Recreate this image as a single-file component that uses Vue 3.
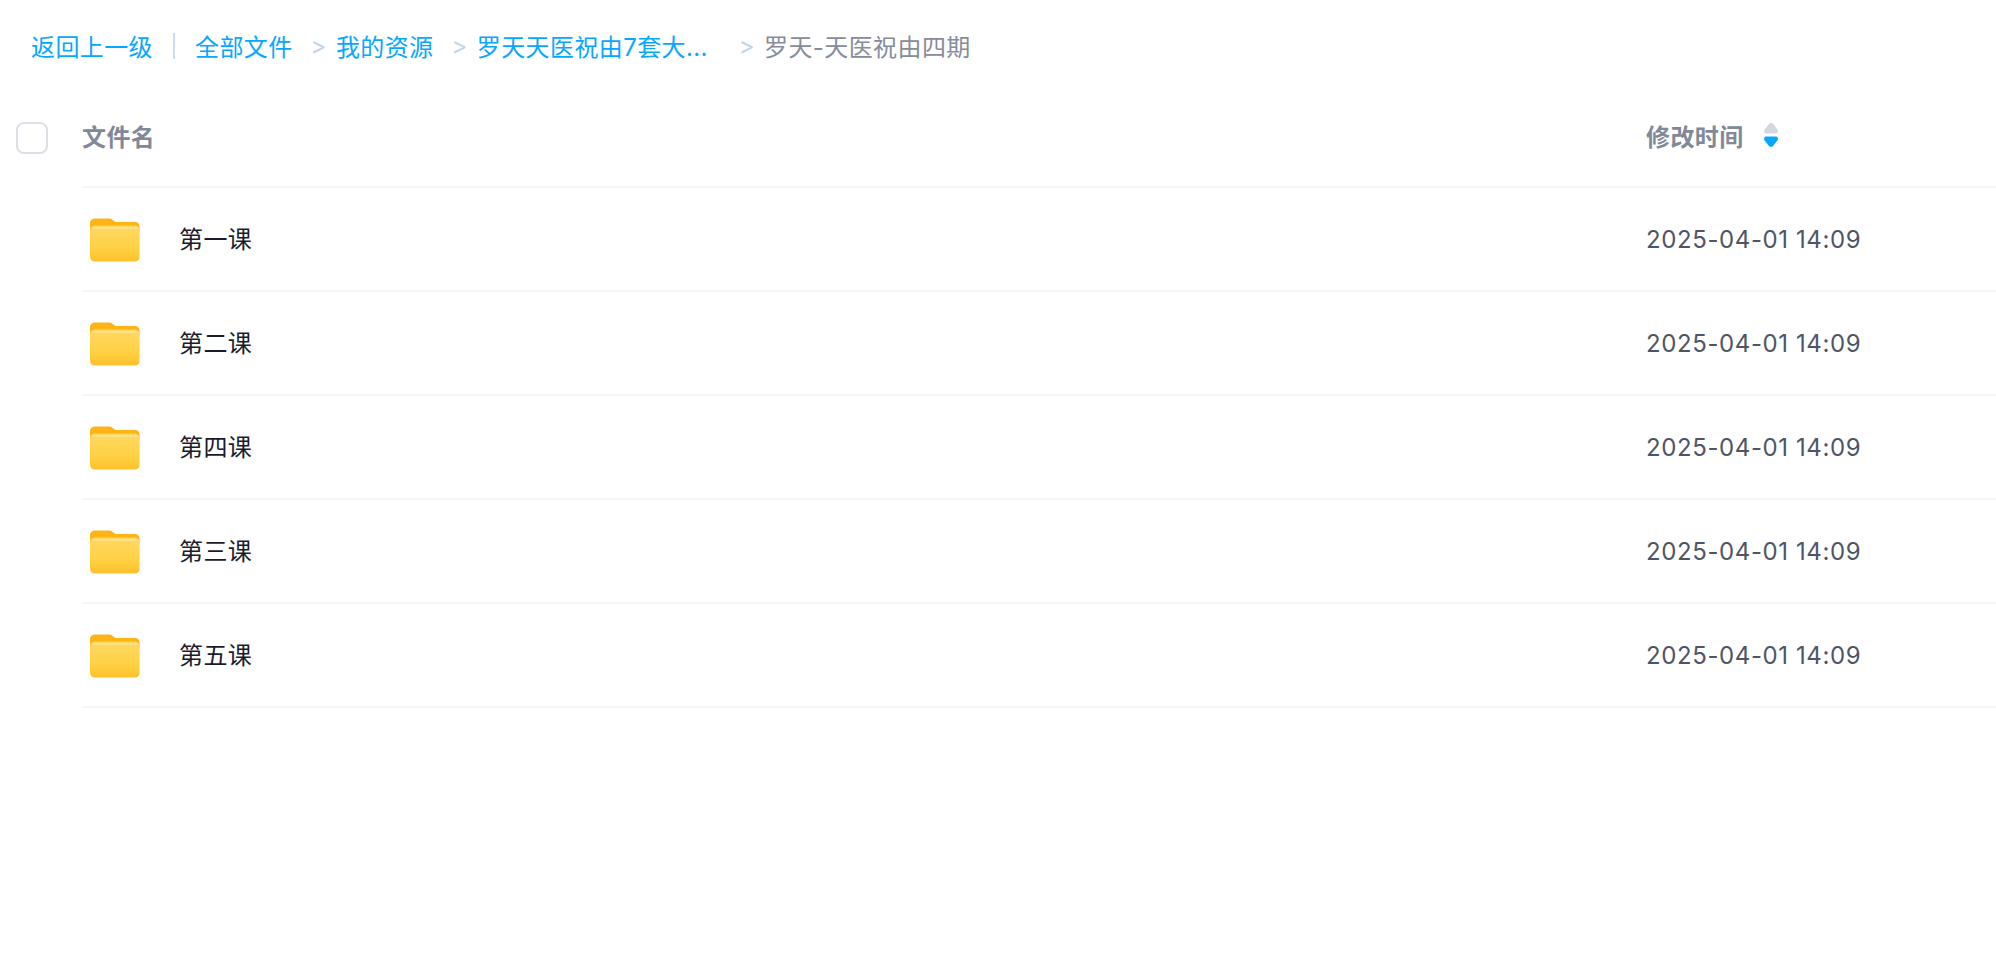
<script setup>
const crumbs = [
  { name: "全部文件" },
  { name: "我的资源" },
  { name: "罗天天医祝由7套大...", wide: true },
];

const files = [
  { name: "第一课", time: "2025-04-01 14:09" },
  { name: "第二课", time: "2025-04-01 14:09" },
  { name: "第四课", time: "2025-04-01 14:09" },
  { name: "第三课", time: "2025-04-01 14:09" },
  { name: "第五课", time: "2025-04-01 14:09" },
];
</script>

<template>
  <div class="page">
    <div class="crumbs">
      <a class="link">返回上一级</a>
      <span class="bar"></span>
      <template v-for="c in crumbs" :key="c.name">
        <a class="link" :class="{ wide: c.wide }">{{ c.name }}</a>
        <span class="sep">&gt;</span>
      </template>
      <span class="current">罗天-天医祝由四期</span>
    </div>

    <div class="head">
      <span class="check"></span>
      <div class="head-row">
        <span class="col-name">文件名</span>
        <span class="col-time">
          修改时间
          <svg class="sort" width="16" height="26" viewBox="0 0 16 26">
            <path d="M8 1 C9 1 9.8 1.6 10.5 2.4 L14.4 7.4 C15.6 9.3 14.8 11.6 12.6 11.6 H3.4 C1.2 11.6 0.4 9.3 1.6 7.4 L5.5 2.4 C6.2 1.6 7 1 8 1 Z" fill="#d3d7e0" />
            <path d="M8 25 C9 25 9.8 24.4 10.5 23.6 L14.4 18.6 C15.6 16.7 14.8 14.4 12.6 14.4 H3.4 C1.2 14.4 0.4 16.7 1.6 18.6 L5.5 23.6 C6.2 24.4 7 25 8 25 Z" fill="#06a7ff" />
          </svg>
        </span>
      </div>
    </div>

    <div class="list">
      <div v-for="f in files" :key="f.name" class="row">
        <span class="icon">
          <svg width="50" height="44" viewBox="0 0 50 46" preserveAspectRatio="none">
            <defs>
              <linearGradient id="front" x1="0" y1="0" x2="0" y2="1">
                <stop offset="0" stop-color="#ffd964" />
                <stop offset="0.7" stop-color="#ffcf3f" />
                <stop offset="1" stop-color="#ffc02a" />
              </linearGradient>
            </defs>
            <path d="M0 6 C0 2.5 2 0.5 5 0.5 H19 C21 0.5 22 1.3 23.5 2.6 L25.5 4.3 H44.5 C47.8 4.3 49.6 6 49.6 9.5 V14 H0 Z" fill="#ffb314" />
            <path d="M0 13 C0 9.5 2 7.8 5 7.8 H44.5 C47.8 7.8 49.6 9.5 49.6 13 V40 C49.6 43.6 47.6 45.5 44.5 45.5 H5 C2 45.5 0 43.6 0 40 Z" fill="url(#front)" />
            <path d="M5 9.5 H45 C46.3 9.5 47.3 10.3 47.8 11.3 H2.2 C2.7 10.3 3.7 9.5 5 9.5 Z" fill="#ffe58f" />
          </svg>
        </span>
        <span class="name">{{ f.name }}</span>
        <span class="time">{{ f.time }}</span>
      </div>
    </div>
  </div>
</template>

<style>
html,
body {
  margin: 0;
  background: #fff;
}
</style>

<style scoped>
.page {
  width: 1996px;
  height: 960px;
  overflow: hidden;
  background: #fff;
  font-family: Inter, "Noto Sans CJK SC", sans-serif;
  font-size: 24px;
  letter-spacing: 0.4px;
}

.crumbs {
  display: flex;
  align-items: center;
  height: 96px;
  padding: 0 0 5px 31px;
  box-sizing: border-box;
}

.link {
  color: #06a7ff;
  white-space: nowrap;
}

.link.wide {
  width: 244px;
}

.bar {
  width: 2px;
  height: 26px;
  margin: 0 20px 0 20px;
  background: #cddbee;
}

.sep {
  margin: 0 9px 0 18px;
  color: #c3d3ea;
}

.current {
  color: #878c9c;
  white-space: nowrap;
}

.head {
  display: flex;
  align-items: stretch;
  height: 92px;
}

.check {
  flex: none;
  width: 32px;
  height: 32px;
  margin: 26px 0 0 16px;
  box-sizing: border-box;
  border: 2px solid #dcdfe6;
  border-radius: 8px;
}

.head-row {
  flex: 1;
  display: flex;
  align-items: center;
  margin-left: 34px;
  padding-bottom: 12px;
  border-bottom: 2px solid #f5f6f8;
  color: #818999;
  font-weight: 700;
}

.col-name {
  flex: 1;
}

.col-time {
  display: flex;
  align-items: center;
  width: 350px;
}

.sort {
  margin-left: 19px;
}

.list {
  margin-left: 82px;
}

.row {
  display: flex;
  align-items: center;
  height: 104px;
  box-sizing: border-box;
  border-bottom: 2px solid #f5f6f8;
}

.icon {
  display: flex;
  flex: none;
  margin: 2px 0 0 8px;
  width: 89px;
}

.name {
  flex: 1;
  padding-bottom: 4px;
  color: #1a1c2e;
}

.time {
  width: 350px;
  color: #4f5566;
  letter-spacing: 0.6px;
}
</style>
